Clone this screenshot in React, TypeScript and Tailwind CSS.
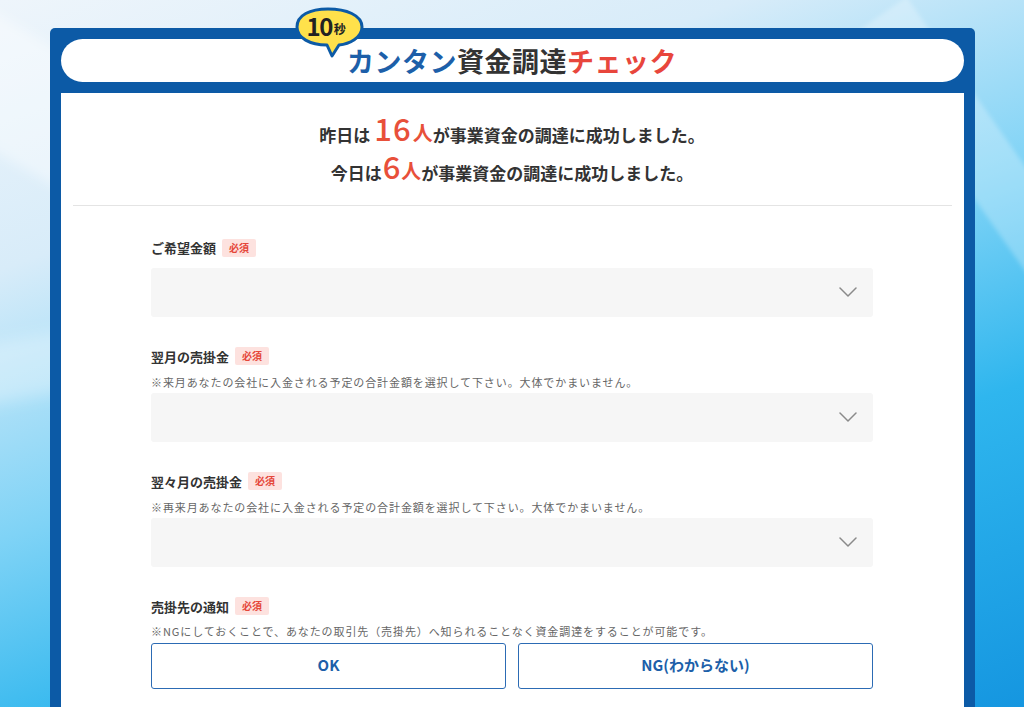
import React from "react";

const fields = [
  { id: 1, label: "ご希望金額", note: "" },
  { id: 2, label: "翌月の売掛金", note: "※来月あなたの会社に入金される予定の合計金額を選択して下さい。大体でかまいません。" },
  { id: 3, label: "翌々月の売掛金", note: "※再来月あなたの会社に入金される予定の合計金額を選択して下さい。大体でかまいません。" },
];

const Badge = () => (
  <span className="ml-[6px] inline-flex h-[18px] items-center rounded-[2px] bg-[#fde2df] px-[7px] text-[10px] font-bold leading-none text-[#e5473a]">
    必須
  </span>
);

const Chevron = () => (
  <svg width="18" height="10" viewBox="0 0 18 10" fill="none">
    <path d="M1 1L9 9L17 1" stroke="#8a8a8a" strokeWidth={1.5} strokeLinecap="round" strokeLinejoin="round" />
  </svg>
);

const Bubble = () => (
  <div className="absolute left-[233px] top-[-32px] h-[52px] w-[72px]">
    <svg width="72" height="52" viewBox="0 0 72 52" fill="none" className="absolute left-0 top-0">
      <path
        d="M34 2C52 2 68 8 68 20C68 31 55 37 45 38L38 49L33 38C16 38 3 31 3 20C3 8 16 2 34 2Z"
        fill="#ffe14b"
        stroke="#0c5aa6"
        strokeWidth={3}
        strokeLinejoin="round"
      />
    </svg>
    <div className="absolute left-[13px] top-[7px] flex items-end leading-none text-[#222]">
      <span className="text-[24px] font-bold tracking-[-1.5px]">10</span>
      <span className="mb-[3px] ml-[2px] text-[12px] font-bold">秒</span>
    </div>
  </div>
);

export default function App() {
  return (
    <div
      className="relative h-[707px] w-full overflow-hidden bg-[linear-gradient(160deg,#eef5fb_0%,#d8ecf9_25%,#7fd3f6_50%,#2fb6ee_70%,#1596e0_100%)]"
      style={{ fontFamily: '"Noto Sans CJK JP", "Noto Sans", sans-serif' }}
    >
      {/* light streaks */}
      <div className="absolute left-[-120px] top-[60px] h-[120px] w-[360px] rotate-[30deg] bg-white/40 blur-[6px]" />
      <div className="absolute right-[-60px] top-[-40px] h-[600px] w-[60px] rotate-[-35deg] bg-white/25 blur-[2px]" />
      <div className="absolute left-[-40px] top-[330px] h-[60px] w-[220px] rotate-[-10deg] bg-white/30 blur-[8px]" />

      <div className="relative mx-auto mt-[28px] w-[925px] rounded-t-[5px] bg-[#0c5aa6] px-[11px] pt-[11px]">
        <div className="relative flex h-[43px] items-center justify-center rounded-full bg-white">
          <Bubble />
          <h1 className="text-[27px] font-bold leading-none tracking-[0.5px]">
            <span className="text-[#1d5fa9]">カンタン</span>
            <span className="text-[#333]">資金調達</span>
            <span className="text-[#e8463c]">チェック</span>
          </h1>
        </div>

        <div className="mt-[11px] bg-white pb-[40px]">
          <div className="mx-[12px] flex flex-col items-center border-b border-[#e4e4e4] pb-[24px] pt-[12px] text-[17px] font-bold text-[#333]">
            <p className="flex h-[38px] items-end leading-none">
              昨日は
              <span className="ml-[4px] mr-[1px] text-[31px] font-medium leading-none tracking-[1px] text-[#e8503a]">16</span>
              <span className="text-[20px] leading-none text-[#e8503a]">人</span>
              が事業資金の調達に成功しました。
            </p>
            <p className="flex h-[38px] items-end leading-none">
              今日は
              <span className="mx-[1px] text-[31px] font-medium leading-none text-[#e8503a]">6</span>
              <span className="text-[20px] leading-none text-[#e8503a]">人</span>
              が事業資金の調達に成功しました。
            </p>
          </div>

          <div className="mx-auto w-[722px] pt-[32px]">
            {fields.map((f) => (
              <div key={f.id} className="mb-[30px]">
                <div className="flex items-center text-[13px] font-bold text-[#333]">
                  {f.label}
                  <Badge />
                </div>
                {f.note && (
                  <p className="mt-[8px] text-[11px] tracking-[0.9px] text-[#666]">{f.note}</p>
                )}
                <div className={`flex h-[49px] items-center justify-end rounded-[3px] bg-[#f6f6f6] pr-[16px] ${f.note ? "mt-[2px]" : "mt-[10px]"}`}>
                  <Chevron />
                </div>
              </div>
            ))}

            <div>
              <div className="flex items-center text-[13px] font-bold text-[#333]">
                売掛先の通知
                <Badge />
              </div>
              <p className="mt-[7px] text-[11px] tracking-[0.9px] text-[#666]">
                ※NGにしておくことで、あなたの取引先（売掛先）へ知られることなく資金調達をすることが可能です。
              </p>
              <div className="mt-[3px] grid grid-cols-2 gap-[12px]">
                <button className="h-[46px] rounded-[3px] border border-[#2c6bb4] text-[15px] font-bold text-[#1d5fa9]">
                  OK
                </button>
                <button className="h-[46px] rounded-[3px] border border-[#2c6bb4] text-[15px] font-bold text-[#1d5fa9]">
                  NG(わからない)
                </button>
              </div>
            </div>
          </div>
        </div>
      </div>
    </div>
  );
}
